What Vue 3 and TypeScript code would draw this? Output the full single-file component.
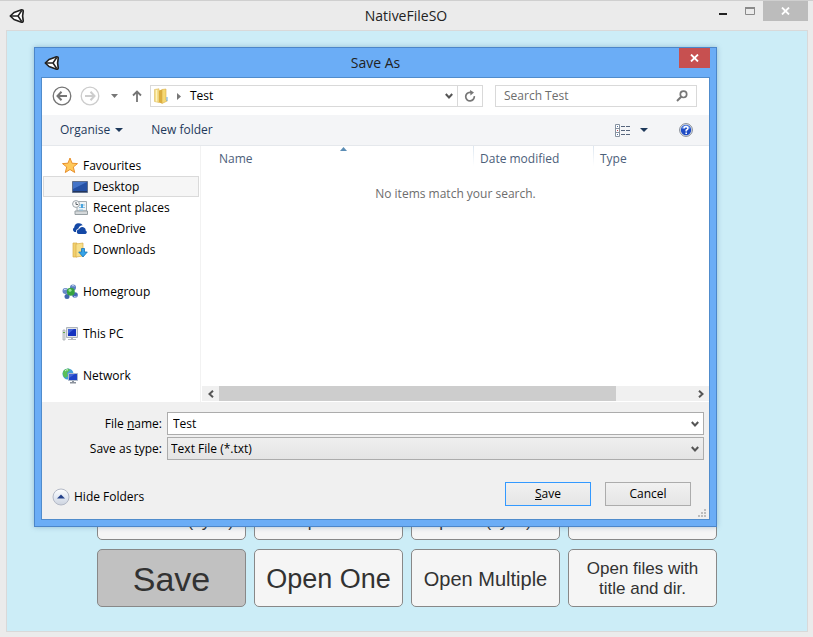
<script setup lang="ts">
import { ref } from 'vue'

interface Place {
  id: string
  label: string
  child?: boolean
  gapAfter?: boolean
}

const places: Place[] = [
  { id: 'favourites', label: 'Favourites' },
  { id: 'desktop', label: 'Desktop', child: true },
  { id: 'recent', label: 'Recent places', child: true },
  { id: 'onedrive', label: 'OneDrive', child: true },
  { id: 'downloads', label: 'Downloads', child: true, gapAfter: true },
  { id: 'homegroup', label: 'Homegroup', gapAfter: true },
  { id: 'pc', label: 'This PC', gapAfter: true },
  { id: 'network', label: 'Network' },
]

const actions = [
  { id: 1, label: 'Select file (sync)', size: 'low' },
  { id: 2, label: 'panel', size: 'low' },
  { id: 3, label: 'panel (sync)', size: 'low' },
  { id: 4, label: 'extension', size: 'low' },
  { id: 5, label: 'Save', size: 'huge' },
  { id: 6, label: 'Open One', size: 'large' },
  { id: 7, label: 'Open Multiple', size: 'medium' },
  { id: 8, label: 'Open files with title and dir.', size: 'small' },
]

const selected = ref('desktop')
const pressed = ref(5)
const fileName = ref('Test')
const search = ref('')
const fileType = ref('txt')
</script>

<template>
  <div class="window">
    <header class="titlebar">
      <svg class="unity" viewBox="0 0 16 16" aria-hidden="true">
        <path d="M1.300 8L5 4.500L12.500 1.800Q14.300 1.500 14.200 3.500L13.600 8L14.200 12.500Q14.300 14.500 12.500 14.200L5 11.500Z" fill="#fff" stroke="#222" stroke-width="1.700" stroke-linejoin="round" />
        <path d="M1.500 8H9M9 8L12.700 2.500M9 8L12.700 13.500" fill="none" stroke="#222" stroke-width="1.500" />
      </svg>
      <h1>NativeFileSO</h1>
      <div class="controls">
        <button class="min" aria-label="Minimise"><svg viewBox="0 0 8 3"><path d="M0 0H8V2H0Z" fill="#222" /></svg></button>
        <button class="max" aria-label="Maximise"><svg viewBox="0 0 10 8"><path d="M.5 1H9.500V7.500H.5Z" fill="none" stroke="#8a8a8a" /><path d="M0 0H10V2H0Z" fill="#8a8a8a" /></svg></button>
        <button class="shut" aria-label="Close"><svg viewBox="0 0 9 8"><path d="M1 .5L8 7.500M8 .5L1 7.500" stroke="#fff" stroke-width="1.800" /></svg></button>
      </div>
    </header>
    <main class="client">
      <div class="actions">
        <button v-for="a in actions" :key="a.id" :class="['action', a.size, { pressed: pressed === a.id }]" @click="pressed = a.id">{{ a.label }}</button>
      </div>
    </main>

    <section class="dialog" role="dialog" aria-labelledby="dialog-title">
      <header class="dialog-title">
        <svg class="unity" viewBox="0 0 16 16" aria-hidden="true">
          <path d="M1.300 8L5 4.500L12.500 1.800Q14.300 1.500 14.200 3.500L13.600 8L14.200 12.500Q14.300 14.500 12.500 14.200L5 11.500Z" fill="#fff" stroke="#222" stroke-width="1.700" stroke-linejoin="round" />
          <path d="M1.500 8H9M9 8L12.700 2.500M9 8L12.700 13.500" fill="none" stroke="#222" stroke-width="1.500" />
        </svg>
        <h2 id="dialog-title">Save As</h2>
        <button class="dialog-close" aria-label="Close dialog"><svg viewBox="0 0 9 8"><path d="M1 .5L8 7.500M8 .5L1 7.500" stroke="#fff" stroke-width="1.800" /></svg></button>
      </header>

      <div class="dialog-body">
        <nav class="navigation">
          <button class="round" aria-label="Back">
            <svg viewBox="0 0 20 20"><circle cx="10" cy="10" r="8.800" fill="none" stroke="#757575" stroke-width="1.300" /><path d="M15 10H6M9.500 5.800L5.500 10L9.500 14.200" fill="none" stroke="#757575" stroke-width="2" /></svg>
          </button>
          <button class="round forward" aria-label="Forward">
            <svg viewBox="0 0 20 20"><circle cx="10" cy="10" r="8.800" fill="none" stroke="#cdcdcd" stroke-width="1.300" /><path d="M5 10H14M10.500 5.800L14.500 10L10.500 14.200" fill="none" stroke="#cdcdcd" stroke-width="2" /></svg>
          </button>
          <button class="history" aria-label="Recent locations"><svg viewBox="0 0 7 4"><path d="M0 0H7L3.500 4Z" fill="#777" /></svg></button>
          <button class="up" aria-label="Up"><svg viewBox="0 0 10 12"><path d="M5 12V2M1 5.500L5 1.500L9 5.500" fill="none" stroke="#757575" stroke-width="1.800" /></svg></button>
          <div class="address">
            <svg class="folder" viewBox="0 0 14 16" aria-hidden="true">
              <path d="M.5 1.500L5 .8V14.500L.5 13.500Z" fill="#f6df8c" stroke="#dcb85a" stroke-width=".6" />
              <path d="M5 2.500L8 1.500V15.500L5 14.500Z" fill="#dcae3e" />
              <path d="M8 1.500L12 1V12L13.200 13L8 15.500Z" fill="#f5d873" stroke="#d8ad48" stroke-width=".6" />
              <path d="M2.500 2V13.500" stroke="#fdf3c0" />
              <path d="M13 9V13" stroke="#6da9d8" />
            </svg>
            <svg class="crumb" viewBox="0 0 4 7" aria-hidden="true"><path d="M0 0L4 3.500L0 7Z" fill="#777" /></svg>
            <span class="path">Test</span>
            <button class="drop" aria-label="Previous locations"><svg class="chevron" viewBox="0 0 8 6"><path d="M.8 1L4 4.500L7.200 1" /></svg></button>
            <button class="refresh" aria-label="Refresh"><svg viewBox="0 0 12 12"><path d="M10.300 6.200A4.300 4.300 0 1 1 6 2.300H7" fill="none" stroke="#777" stroke-width="1.700" /><path d="M6 0L10 2.500L6.500 5.500Z" fill="#777" /></svg></button>
          </div>
          <div class="search">
            <input v-model="search" type="search" placeholder="Search Test" aria-label="Search Test" />
            <svg viewBox="0 0 12 12" aria-hidden="true"><circle cx="7.500" cy="4.300" r="3.200" fill="none" stroke="#777" stroke-width="1.700" /><path d="M5.200 6.800L1 11" stroke="#777" stroke-width="2" /></svg>
          </div>
        </nav>

        <div class="toolbar">
          <button class="organise">Organise <svg viewBox="0 0 8 4"><path d="M0 0H8L4 4Z" fill="#1e395b" /></svg></button>
          <button>New folder</button>
          <div class="tools">
            <button class="view" aria-label="Change your view">
              <svg viewBox="0 0 15 13"><path d="M.5 .5H4.500V12.500H.5ZM.5 4.500H4.500M.5 8.500H4.500" fill="#fff" stroke="#8792a0" /><path d="M2 2H3V3H2ZM2 10H3V11H2Z" fill="#4a72a8" /><path d="M2 6H3V7H2Z" fill="#c04c4c" /><path d="M6 2.500H10M11 2.500H15M6 6.500H10M11 6.500H15M6 10.500H10M11 10.500H15" stroke="#56657c" /></svg>
            </button>
            <button class="view-menu" aria-label="More view options"><svg viewBox="0 0 8 4"><path d="M0 0H8L4 4Z" fill="#1e395b" /></svg></button>
            <button class="help" aria-label="Help">
              <svg viewBox="0 0 14 14"><circle cx="7" cy="7" r="6.400" fill="#dfe5ee" stroke="#838994" /><circle cx="7" cy="7" r="5.200" fill="#1f4cc4" /><path d="M2.500 6A4.600 4.600 0 0 1 11.500 6Q7 4 2.500 6Z" fill="#5d8bea" /><path d="M5 5.500Q5 3.500 7 3.500T9 5.300Q9 6.400 7.200 7.200V8.500" fill="none" stroke="#fff" stroke-width="1.500" /><path d="M6.400 9.500H8V11H6.400Z" fill="#fff" /></svg>
            </button>
          </div>
        </div>

        <div class="browser">
          <ul class="places">
            <li v-for="p in places" :key="p.id" :class="{ gap: p.gapAfter }">
              <button :class="['place', { child: p.child, selected: selected === p.id }]" @click="selected = p.id">
                <svg viewBox="0 0 16 16" aria-hidden="true">
                  <path v-if="p.id === 'favourites'" d="M8 0L10 5.200L15.500 5.600L11.300 9L12.700 14.500L8 11.500L3.300 14.500L4.700 9L.5 5.600L6 5.200Z" fill="#ffc95a" stroke="#e8902c" />
                  <template v-else-if="p.id === 'desktop'">
                    <path d="M.5 2.500H15.500V13.500H.5Z" fill="#2450a4" stroke="#60708c" /><path d="M1 3H15L1 10Z" fill="#4474c8" /><path d="M1 12.500H15" stroke="#24375e" />
                  </template>
                  <template v-else-if="p.id === 'recent'">
                    <path d="M5 1.500H14.500V11H5Z" fill="#eef3f6" stroke="#a2abb0" /><path d="M3 11H15.500V14.500H3Z" fill="#d5d9db" stroke="#979fa3" /><path d="M7 5H13M7 7.500H13M7 10H11" stroke="#8cc0e0" /><path d="M9 4H11V8H9Z" fill="#48a4df" /><circle cx="4" cy="4" r="3.400" fill="#fafafa" stroke="#9ca4a9" /><path d="M4 2V4.500H6" fill="none" stroke="#5c646a" />
                  </template>
                  <template v-else-if="p.id === 'onedrive'">
                    <path d="M4 11H2.500A2.500 2.500 0 0 1 2.200 6.500A4.700 4.700 0 0 1 10.800 4.300Q7 4.500 6.500 7.500Q3.800 8 4 11Z" fill="#1448a5" /><path d="M6.500 13A2.400 2.400 0 0 1 7 8.300A3.500 3.500 0 0 1 13.200 7.500Q13.800 8.600 13.600 9.400A1.900 1.900 0 0 1 13.500 13Z" fill="#1448a5" />
                  </template>
                  <template v-else-if="p.id === 'downloads'">
                    <path d="M1 1H5V15H1Z" fill="#f1d06d" stroke="#d9ac48" stroke-width=".7" /><path d="M4 2L11 1V14L4 15Z" fill="#f7df8a" stroke="#d9ac48" stroke-width=".7" /><path d="M9.500 6.500H12.500V10H15.300L11 15L6.700 10H9.500Z" fill="#36a4e9" stroke="#1875b8" stroke-width=".8" />
                  </template>
                  <template v-else-if="p.id === 'homegroup'">
                    <circle cx="3.500" cy="7" r="3" fill="#6587c8" /><circle cx="11" cy="3.500" r="3" fill="#5c80c3" /><circle cx="13" cy="11" r="2.800" fill="#4468b4" /><circle cx="5" cy="12.500" r="2.500" fill="#4167ae" /><circle cx="8.800" cy="7.800" r="4" fill="#36a340" /><circle cx="8" cy="6.300" r="1.500" fill="#9be094" /><path d="M1.800 6Q3 4.800 4.500 5.500M9.800 2Q11 1 12.500 2.200M12 12.500Q13 13.800 14.500 12.300" stroke="#cfdef7" fill="none" />
                  </template>
                  <template v-else-if="p.id === 'pc'">
                    <path d="M1 4H3V14H1Z" fill="#dde0e2" stroke="#a9afb4" stroke-width=".8" /><path d="M1 6H3V7H1Z" fill="#64a648" /><path d="M4.500 1.500H15.500V11.500H4.500Z" fill="#e2e5e8" stroke="#aeb4bb" /><path d="M6 3H14V10H6Z" fill="#1533bf" /><path d="M6 3H12L6 8Z" fill="#4061d8" /><path d="M9 12H11V13H14V14H6V13H9Z" fill="#b4b8bd" />
                  </template>
                  <template v-else>
                    <circle cx="6" cy="6" r="5.500" fill="#439ed8" /><path d="M2 2Q7-1 8 2L5 5L6 8L3 10Q-1 6 2 2Z" fill="#5abf58" /><path d="M3 3Q5 1 6 2" stroke="#d4f2d3" fill="none" /><path d="M6.500 5.500H15.500V12.500H6.500Z" fill="#1e43c8" stroke="#aeb9c8" /><path d="M7 6H13L7 10Z" fill="#4465d8" /><path d="M10 13H12V14H14V15.500H8V14H10Z" fill="#8b929c" />
                  </template>
                </svg>
                {{ p.label }}
              </button>
            </li>
          </ul>

          <div class="files">
            <table>
              <thead>
                <tr>
                  <th class="name">Name<svg viewBox="0 0 7 4" aria-hidden="true"><path d="M0 4L3.500 0L7 4Z" fill="#5b8db5" /></svg></th>
                  <th class="date">Date modified</th>
                  <th class="type">Type</th>
                </tr>
              </thead>
              <tbody>
                <tr><td colspan="3">No items match your search.</td></tr>
              </tbody>
            </table>
            <div class="scrollbar">
              <button aria-label="Scroll left"><svg class="chevron" viewBox="0 0 6 8"><path d="M5 .8L1.500 4L5 7.200" /></svg></button>
              <div class="track"><div class="thumb"></div></div>
              <button aria-label="Scroll right"><svg class="chevron" viewBox="0 0 6 8"><path d="M1 .8L4.500 4L1 7.200" /></svg></button>
            </div>
          </div>
        </div>

        <form class="details" @submit.prevent>
          <div class="fields">
            <label for="file-name">File <u>n</u>ame:</label>
            <div class="combo">
              <input id="file-name" v-model="fileName" type="text" />
              <svg class="chevron" viewBox="0 0 8 6" aria-hidden="true"><path d="M.8 1L4 4.500L7.200 1" /></svg>
            </div>
            <label for="file-type">Save as <u>t</u>ype:</label>
            <div class="combo grey">
              <select id="file-type" v-model="fileType"><option value="txt">Text File (*.txt)</option></select>
              <svg class="chevron" viewBox="0 0 8 6" aria-hidden="true"><path d="M.8 1L4 4.500L7.200 1" /></svg>
            </div>
          </div>
          <div class="footer">
            <button type="button" class="hide">
              <svg viewBox="0 0 18 18" aria-hidden="true">
                <defs><linearGradient id="orb" x1="0" y1="0" x2="0" y2="1"><stop offset="0" stop-color="#fff" /><stop offset=".5" stop-color="#e3e9f3" /><stop offset="1" stop-color="#cdd3de" /></linearGradient></defs>
                <circle cx="9" cy="9" r="8" fill="url(#orb)" stroke="#b3b9c6" /><path d="M5 10.500L9 6.500L13 10.500Z" fill="#23408a" />
              </svg>
              Hide Folders
            </button>
            <button type="submit" class="push primary"><u>S</u>ave</button>
            <button type="button" class="push">Cancel</button>
          </div>
          <svg class="grip" viewBox="0 0 8 8" aria-hidden="true"><path d="M6 0H8V2H6ZM3 3H5V5H3ZM6 3H8V5H6ZM0 6H2V8H0ZM3 6H5V8H3ZM6 6H8V8H6Z" fill="#bdbdbd" /></svg>
        </form>
      </div>
    </section>
  </div>
</template>

<style>
body {
  margin: 0;
}
</style>

<style scoped>
* {
  box-sizing: border-box;
}
.window {
  position: relative;
  display: flex;
  flex-direction: column;
  min-height: 100vh;
  padding: 0 5px 5px 6px;
  border-top: 1px solid #cfcfcf;
  background: #ebebeb;
  color: #000;
  font: 12px/16px "Open Sans", "Noto Sans", sans-serif;
}
button,
input,
select {
  margin: 0;
  padding: 0;
  border: 0;
  background: none;
  color: inherit;
  font: inherit;
}
svg {
  display: block;
  flex: none;
}
h1,
h2 {
  flex: 1;
  margin: 0;
  color: #222;
  font-size: 14px;
  font-weight: 400;
  line-height: 20px;
  text-align: center;
}
.chevron path {
  fill: none;
  stroke: #555;
  stroke-width: 2;
}
.titlebar {
  display: flex;
  align-items: center;
  height: 29px;
  padding-left: 3px;
}
.unity {
  width: 16px;
  height: 16px;
}
.titlebar h1 {
  padding-left: 78px;
}
.controls {
  display: flex;
  align-self: flex-start;
}
.controls button {
  display: grid;
  place-items: center;
  width: 27px;
  height: 20px;
}
.controls .shut {
  width: 45px;
  background: #bcbcbc;
}
.min svg {
  width: 8px;
  height: 3px;
  margin-top: 6px;
}
.max svg {
  width: 10px;
  height: 8px;
}
.shut svg,
.dialog-close svg {
  width: 9px;
  height: 8px;
}
.client {
  display: flex;
  flex: 1;
  flex-direction: column;
  justify-content: flex-end;
  padding: 0 90px 24px;
  border: 1px solid #d9d9d9;
  background: #ccedf7;
}
.actions {
  display: grid;
  grid-template-columns: repeat(4, minmax(0, 1fr));
  gap: 9px 8px;
}
.action {
  height: 58px;
  padding: 2px 10px 0;
  border: 1px solid #888;
  border-radius: 5px;
  background: #f5f5f5;
  color: #323232;
  font-family: "Liberation Sans", Arial, sans-serif;
  white-space: nowrap;
}
.action.pressed {
  background: #c1c1c1;
}
.small,
.low {
  font-size: 17px;
  line-height: 20px;
}
.small {
  white-space: normal;
}
.low {
  padding-top: 22px;
}
.medium {
  font-size: 20px;
}
.large {
  font-size: 27px;
}
.huge {
  font-size: 34px;
}

.dialog {
  position: absolute;
  top: 46px;
  right: 96px;
  left: 34px;
  padding: 0 6px 6px;
  border: 1px solid #4c86c9;
  background: #6badf6;
  box-shadow: 0 0 5px rgba(60, 110, 150, 0.4);
}
.dialog-title {
  display: flex;
  align-items: center;
  height: 29px;
  padding-left: 3px;
}
.dialog-title h2 {
  padding-left: 12px;
}
.dialog-close {
  display: grid;
  place-items: center;
  align-self: flex-start;
  width: 31px;
  height: 20px;
  background: #c75050;
}
.dialog-body {
  border: 1px solid #508ccc;
  background: #fff;
}
.navigation {
  display: flex;
  align-items: center;
  height: 37px;
  padding: 0 12px 1px 10px;
}
.round svg {
  width: 20px;
  height: 20px;
}
.forward {
  margin-left: 8px;
}
.history {
  margin-left: 11px;
}
.history svg {
  width: 7px;
  height: 4px;
}
.up {
  margin-left: 14px;
}
.up svg {
  width: 10px;
  height: 12px;
}
.address,
.search {
  display: flex;
  align-items: center;
  height: 22px;
  border: 1px solid #d9d9d9;
  background: #fff;
}
.address {
  flex: 1;
  margin-left: 8px;
}
.folder {
  width: 14px;
  height: 16px;
  margin-left: 3px;
}
.crumb {
  width: 4px;
  height: 7px;
  margin: 0 9px;
}
.path {
  flex: 1;
}
.drop {
  padding: 4px;
}
.drop svg,
.combo svg {
  width: 8px;
  height: 6px;
}
.refresh {
  display: grid;
  place-items: center;
  align-self: stretch;
  width: 25px;
  border-left: 1px solid #d9d9d9;
}
.refresh svg,
.search svg {
  width: 12px;
  height: 12px;
}
.search {
  flex: 0 0 202px;
  min-width: 0;
  margin-left: 12px;
  padding: 0 8px;
}
.search input {
  flex: 1;
  min-width: 0;
  outline: 0;
}
.search input::placeholder {
  color: #6d6d6d;
  opacity: 1;
}
.toolbar {
  display: flex;
  align-items: center;
  gap: 28px;
  height: 31px;
  padding: 0 16px 0 18px;
  border-bottom: 1px solid #e5e8ec;
  background: #f4f5f7;
  color: #1e395b;
}
.organise {
  display: flex;
  align-items: center;
  gap: 5px;
}
.organise svg,
.view-menu svg {
  width: 8px;
  height: 4px;
}
.tools {
  display: flex;
  align-items: center;
  margin-left: auto;
}
.view svg {
  width: 15px;
  height: 13px;
}
.view-menu {
  margin-left: 10px;
}
.help {
  margin-left: 31px;
}
.help svg {
  width: 14px;
  height: 14px;
}
.browser {
  display: grid;
  grid-template-columns: 159px 1fr;
  height: 256px;
}
.places {
  margin: 0;
  padding: 9px 1px 0;
  border-right: 1px solid #f2f2f2;
  list-style: none;
}
.gap {
  margin-bottom: 21px;
}
.place {
  display: flex;
  align-items: center;
  gap: 5px;
  width: 100%;
  height: 21px;
  padding-left: 18px;
  border: 1px solid transparent;
}
.place.child {
  padding-left: 28px;
}
.place.selected {
  border-color: #dadada;
  background: #f6f6f6;
}
.place svg {
  width: 16px;
  height: 16px;
}
.files {
  display: flex;
  flex-direction: column;
  justify-content: space-between;
  padding: 0 0 1px 1px;
}
table {
  width: 100%;
  border-collapse: collapse;
  table-layout: fixed;
}
th {
  height: 25px;
  padding: 0 0 0 7px;
  color: #4c607a;
  font-weight: 400;
  text-align: left;
}
th.name {
  position: relative;
  padding-left: 17px;
}
th.name svg {
  position: absolute;
  top: 1px;
  left: 51%;
  width: 7px;
  height: 4px;
}
.date {
  width: 120px;
}
.type {
  width: 116px;
}
.date,
.type {
  background: linear-gradient(#dce6f0, #fff) top left / 1px 20px no-repeat;
}
td {
  height: 46px;
  padding: 0;
  color: #6d6d6d;
  text-align: center;
}
.scrollbar {
  display: flex;
  height: 15px;
  background: #f0f0f0;
}
.scrollbar button {
  display: grid;
  place-items: center;
  width: 17px;
}
.scrollbar svg {
  width: 6px;
  height: 8px;
}
.track {
  flex: 1;
}
.thumb {
  width: 84%;
  height: 100%;
  background: #cdcdcd;
}
.details {
  position: relative;
  padding: 10px 5px 13px 9px;
  background: #f0f0f0;
}
.fields {
  display: grid;
  grid-template-columns: 111px 1fr;
  gap: 2px 5px;
  align-items: center;
}
.fields label {
  text-align: right;
}
.combo {
  display: flex;
  align-items: center;
  height: 23px;
  padding: 0 4px 0 5px;
  border: 1px solid #acacac;
  background: #fff;
}
.combo.grey {
  padding-left: 3px;
  background: linear-gradient(#efefef, #e4e4e4);
}
.combo input,
.combo select {
  flex: 1;
  min-width: 0;
  outline: 0;
  appearance: none;
}
.footer {
  display: flex;
  align-items: center;
  gap: 14px;
  margin-top: 22px;
  padding-right: 13px;
}
.hide {
  display: flex;
  align-items: center;
  gap: 4px;
  margin: 5px auto 0 1px;
}
.hide svg {
  width: 18px;
  height: 18px;
}
.push {
  width: 86px;
  height: 24px;
  border: 1px solid #acacac;
  background: linear-gradient(#f1f1f1, #e5e5e5);
}
.push.primary {
  border-color: #3399ff;
}
.grip {
  position: absolute;
  right: 3px;
  bottom: 2px;
  width: 8px;
  height: 8px;
}
</style>
